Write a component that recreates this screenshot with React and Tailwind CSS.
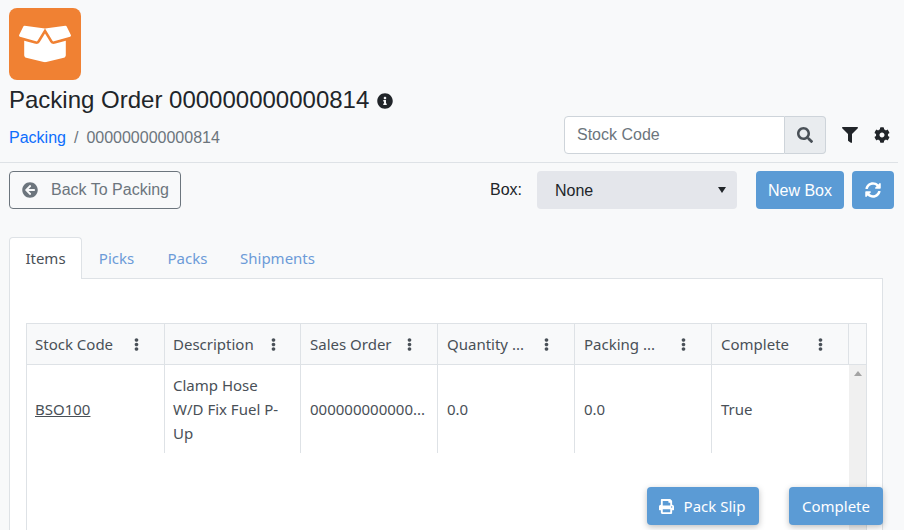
import { FaBoxOpen, FaInfoCircle, FaArrowCircleLeft, FaSearch, FaFilter, FaCog, FaSyncAlt, FaPrint, FaEllipsisV } from 'react-icons/fa';

const columns = ['Stock Code', 'Description', 'Sales Order', 'Quantity ...', 'Packing ...', 'Complete'];
const widths = ['w-[138px] pl-2 pr-[21px]', 'w-[136px] pl-2 pr-[20px]', 'w-[137px] pl-[9px] pr-[21px]', 'w-[137px] pl-[9px] pr-[21px]', 'w-[137px] pl-[9px] pr-[21px]', 'w-[137px] pl-[9px] pr-[21px]'];

export default function App() {
  return (
    <div className="relative h-[530px] w-[904px] overflow-hidden bg-[#f8f9fa] text-[#212529] font-['Liberation_Sans',sans-serif]">
      {/* Header */}
      <div className="w-[898px] border-b border-[#dee2e6]">
        <div className="pl-[9px] pt-2">
          <div className="flex h-[72px] w-[72px] items-center justify-center rounded-lg bg-[#f08133]">
            <FaBoxOpen className="text-white" size={52} />
          </div>
          <h1 className="mt-[4px] flex h-[32px] items-center text-[24px] leading-[32px] font-normal">
            Packing Order 000000000000814
            <FaInfoCircle className="ml-[8px] mt-[2px] text-[16px]" />
          </h1>
        </div>
        <div className="flex h-[46px] pl-[9px]">
          <div className="flex h-[38px] flex-1 items-center pt-[5px] text-[16px] leading-6">
            <a className="text-[#0d6efd]">Packing</a>
            <span className="px-2 text-[#6c757d]">/</span>
            <span className="text-[#6c757d]">000000000000814</span>
          </div>
          <div className="flex h-[38px] w-[262px]">
            <div className="flex flex-1 items-center rounded-l border border-[#ced4da] bg-white pl-3 text-[16px] text-[#6c757d]">Stock Code</div>
            <div className="flex w-[41px] items-center justify-center rounded-r border border-l-0 border-[#ced4da] bg-[#e9ecef]">
              <FaSearch className="text-[16px] text-[#495057]" />
            </div>
          </div>
          <div className="ml-[16px] flex h-[38px] items-center">
            <FaFilter className="text-[16px]" />
            <FaCog className="ml-[16px] mr-[8px] text-[16px]" />
          </div>
        </div>
      </div>

      {/* Toolbar */}
      <div className="mt-2 flex h-[38px] items-center pl-[9px] pr-[10px]">
        <button className="flex h-[38px] w-[172px] items-center rounded border border-[#6c757d] pl-[12px] text-[16px] text-[#6c757d]">
          <FaArrowCircleLeft className="mr-[13px] text-[16px]" />
          Back To Packing
        </button>
        <span className="ml-auto text-[16px]">Box:</span>
        <div className="ml-[15px] flex h-[38px] w-[200px] items-center justify-between rounded bg-[#e4e6eb] pl-[18px] pr-[11px] pt-[2px] text-[16px]">
          None
          <div className="mb-[2px] h-0 w-0 border-x-[4.5px] border-t-[6px] border-x-transparent border-t-[#212529]" />
        </div>
        <button className="ml-[19px] h-[38px] w-[88px] rounded bg-[#5b9bd5] pt-[2px] text-[16px] text-white">New Box</button>
        <button className="ml-2 flex h-[38px] w-[42px] items-center justify-center rounded bg-[#5b9bd5] text-white">
          <FaSyncAlt className="text-[16px]" />
        </button>
      </div>

      {/* Tabs */}
      <div className="mx-[9px] mt-[28px] w-[874px] font-['Noto_Sans',sans-serif] text-[15px]">
        <div className="relative z-10 -mb-px flex h-[42px] items-stretch">
          <div className="flex w-[73px] items-center justify-center rounded-t border border-b-0 border-[#dee2e6] bg-white text-[#495057]">Items</div>
          <div className="flex w-[69px] items-center justify-center text-[#6c9bd8]">Picks</div>
          <div className="flex w-[73px] items-center justify-center text-[#6c9bd8]">Packs</div>
          <div className="flex w-[107px] items-center justify-center text-[#6c9bd8]">Shipments</div>
        </div>
        <div className="h-[260px] border border-[#dee2e6] bg-white pl-4 pt-[44px]">
          {/* Grid */}
          <div className="h-[220px] w-[841px] border-x border-t border-[#dee2e6] text-[#495057]">
            <div className="flex h-[41px] border-b border-[#dee2e6] bg-[#f8f9fa]">
              {columns.map((c, i) => (
                <div key={c} className={`flex items-center justify-between border-r border-[#dee2e6] ${widths[i]}`}>
                  {c}
                  <FaEllipsisV className="text-[13px]" />
                </div>
              ))}
            </div>
            <div className="flex">
              <div className="flex-1">
                <div className="flex h-[88px] items-center leading-6">
                  <div className="flex h-full w-[138px] items-center border-r border-[#dee2e6] pl-2"><span className="underline">BSO100</span></div>
                  <div className="flex h-full w-[136px] items-center border-r border-[#dee2e6] pl-2 pr-3">Clamp Hose W/D Fix Fuel P-Up</div>
                  <div className="flex h-full w-[137px] items-center border-r border-[#dee2e6] pl-[9px]">000000000000...</div>
                  <div className="flex h-full w-[137px] items-center border-r border-[#dee2e6] pl-[9px]">0.0</div>
                  <div className="flex h-full w-[137px] items-center border-r border-[#dee2e6] pl-[9px]">0.0</div>
                  <div className="flex h-full w-[136px] items-center pl-[9px]">True</div>
                </div>
              </div>
              <div className="flex h-[180px] w-[17px] justify-center bg-[#f0f0f0] pt-[6px]">
                <div className="h-0 w-0 border-x-[4px] border-b-[5px] border-x-transparent border-b-[#a3a3a3]" />
              </div>
            </div>
          </div>
        </div>
      </div>

      {/* Floating actions */}
      <button className="absolute left-[647px] top-[487px] flex h-[38px] w-[112px] items-center justify-center rounded bg-[#5b9bd5] pr-[2px] font-['Noto_Sans',sans-serif] text-[15px] text-white shadow-[0_2px_6px_rgba(0,0,0,0.25)]">
        <FaPrint className="mr-[10px] text-[15px]" />
        Pack Slip
      </button>
      <button className="absolute left-[789px] top-[487px] h-[38px] w-[94px] rounded bg-[#5b9bd5] font-['Noto_Sans',sans-serif] text-[15px] text-white shadow-[0_2px_6px_rgba(0,0,0,0.25)]">
        Complete
      </button>
    </div>
  );
}
